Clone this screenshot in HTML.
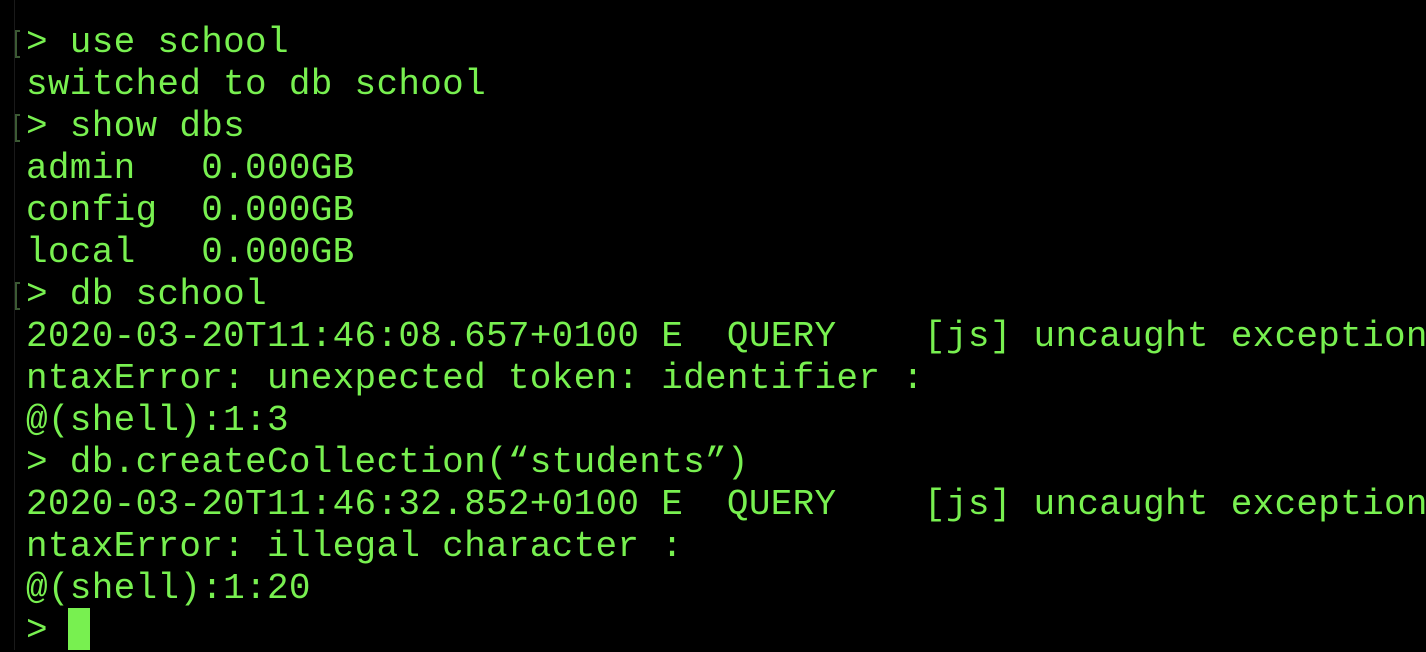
<!DOCTYPE html>
<html><head><meta charset="utf-8"><style>
html,body{margin:0;padding:0;background:#000;width:1426px;height:650px;overflow:hidden}
.t{position:absolute;left:26px;top:22px;font-family:"Liberation Mono","DejaVu Sans Mono",monospace;font-size:36px;letter-spacing:0.3px;line-height:42px;color:#78f050;white-space:pre}
.vl{position:absolute;left:14px;top:0;width:1px;height:650px;background:#1a1a1a}
.br{position:absolute;left:15px;width:5px;height:28px;border:2px solid #3c5a34;border-right:none;box-sizing:border-box}
.cur{position:absolute;left:68px;top:608px;width:22px;height:42px;background:#78f050}
</style></head><body>
<div class="vl"></div>
<div class="br" style="top:30px"></div>
<div class="br" style="top:114px"></div>
<div class="br" style="top:282px"></div>
<div class="t">&gt; use school
switched to db school
&gt; show dbs
admin   0.000GB
config  0.000GB
local   0.000GB
&gt; db school
2020-03-20T11:46:08.657+0100 E  QUERY    [js] uncaught exception
ntaxError: unexpected token: identifier :
@(shell):1:3
&gt; db.createCollection(“students”)
2020-03-20T11:46:32.852+0100 E  QUERY    [js] uncaught exception
ntaxError: illegal character :
@(shell):1:20
&gt; </div>
<div class="cur"></div>
</body></html>
